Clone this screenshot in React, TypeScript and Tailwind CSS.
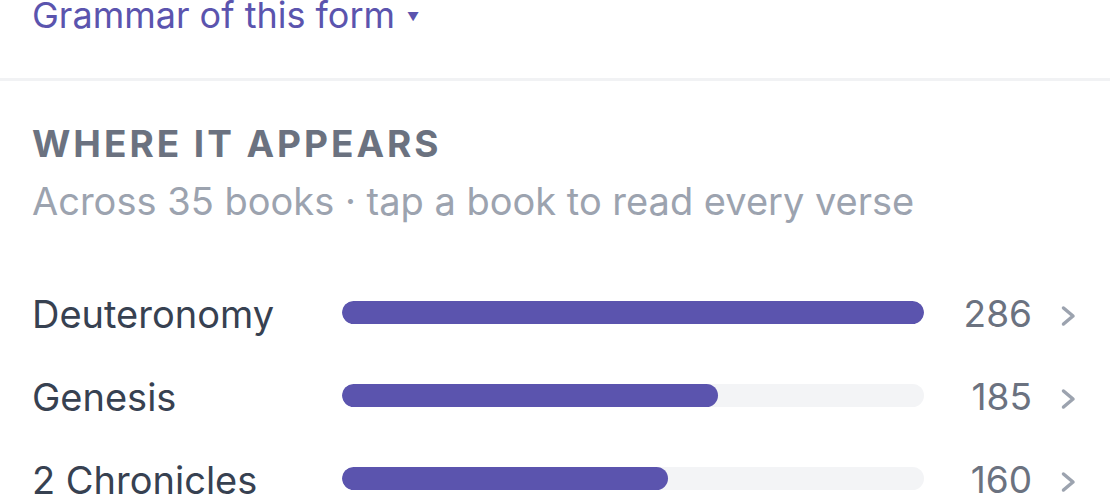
import React from "react";

type Book = { name: string; count: number };

const books: Book[] = [
  { name: "Deuteronomy", count: 286 },
  { name: "Genesis", count: 185 },
  { name: "2 Chronicles", count: 160 },
];

const max = 286;

function Chevron() {
  return (
    <svg width="17" height="22" viewBox="0 0 17 22" fill="none" className="text-[#9ca3af]">
      <path d="M3.5 3 L13 11 L3.5 19" stroke="currentColor" strokeWidth="3.5" strokeLinecap="round" strokeLinejoin="round" />
    </svg>
  );
}

export default function App() {
  return (
    <div className="w-[1110px] h-[500px] overflow-hidden bg-white" style={{ fontFamily: "Inter, 'Noto Sans', sans-serif" }}>
      <div className="px-[32px] -mt-[7px] flex items-center gap-[12px] text-[36px] leading-[44px] text-[#5b54ae]">
        <span>Grammar of this form</span>
        <span className="text-[12px] leading-none mt-[4px]">▼</span>
      </div>
      <div className="mt-[41px] h-[3px] bg-[#f1f2f4]" />
      <div className="px-[32px] pt-[41px]">
        <div className="text-[37px] leading-[44px] font-bold tracking-[0.08em] text-[#6b7280]">WHERE IT APPEARS</div>
        <div className="mt-[12px] text-[38px] leading-[46px] text-[#9ca3af]">Across 35 books · tap a book to read every verse</div>
        <div className="mt-[48px] flex flex-col">
          {books.map((b) => (
            <div key={b.name} className="flex items-center h-[83px]">
              <div className="w-[310px] text-[38px] leading-[46px] text-[#374151]">{b.name}</div>
              <div className="w-[582px] h-[23px] -mt-[3px] rounded-full bg-[#f3f4f6] overflow-hidden">
                <div className="h-full rounded-full bg-[#5b54ae]" style={{ width: `${(b.count / max) * 100}%` }} />
              </div>
              <div className="w-[108px] text-right text-[37px] leading-[46px] text-[#6b7280]">{b.count}</div>
              <div className="ml-[28px] mt-[4px]">
                <Chevron />
              </div>
            </div>
          ))}
        </div>
      </div>
    </div>
  );
}
